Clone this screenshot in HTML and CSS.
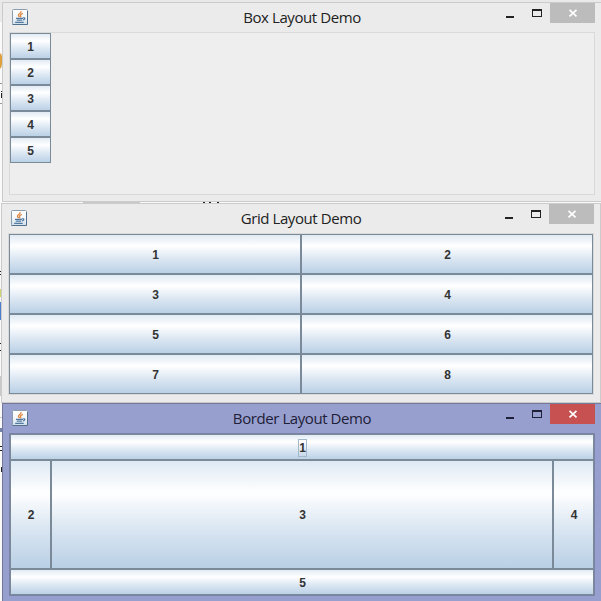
FILE: index.html
```html
<!DOCTYPE html>
<html lang="en">
<head>
<meta charset="utf-8">
<title>Layout Demos</title>
<link rel="stylesheet" href="styles.css">
</head>
<body>
<svg width="0" height="0" class="defs" aria-hidden="true">
  <defs>
    <linearGradient id="tile" x1="0" y1="0" x2="0" y2="1"><stop offset="0" stop-color="#fff"/><stop offset=".5" stop-color="#f4f7fa"/><stop offset="1" stop-color="#cfdfea"/></linearGradient>
    <symbol id="java" viewBox="0 0 16 16">
      <rect x=".5" y=".5" width="15" height="15" rx="1" fill="url(#tile)" stroke="#8a9dae"/>
      <path d="M.5 15.5h15V2" fill="none" stroke="#52718d"/>
      <path d="M9 2C10 4 6.2 4.6 6.4 6.2c.1.8.8 1.2 1.2 1.8M10.8 4.3C9.2 5 8 5.8 8.6 6.8c.4.7.3 1.1-.1 1.6" fill="none" stroke="#df8740" stroke-width="1.3"/>
      <path d="M4 9.4h7M4.8 11.2h5.4M3.2 13.4h8.5M11 8.9c2.5-.7 2.5 1.6 0 2" fill="none" stroke="#52799f" stroke-width="1.2"/>
    </symbol>
    <symbol id="min" viewBox="0 0 10 10"><path d="M1 8h8v2H1z" fill="currentColor"/></symbol>
    <symbol id="max" viewBox="0 0 10 10"><path fill-rule="evenodd" d="M0 1h10v8H0zM1 3v5h8V3z" fill="currentColor"/></symbol>
    <symbol id="close" viewBox="0 0 10 10"><path d="M1.5 1.8l7 6.6M8.5 1.8l-7 6.6" stroke="#fff" stroke-width="1.7" fill="none"/></symbol>
  </defs>
</svg>
<main class="desktop">
  <svg class="backdrop" width="601" height="601" viewBox="0 0 601 601" aria-hidden="true">
    <path fill="#e9e9e9" d="M0 0h601v2H0zM0 0h2v22H0z"/>
    <path fill="#dda03d" d="M0 53q2 1 2 4v7q0 3-2 5z"/>
    <path fill="#999" d="M0 83h2v1H0zM0 103h2v1H0z"/>
    <path fill="#222" d="M1 91h1v1H1zM1 93h1v5H1zM0 271h1v1H0zM0 274h1v1H0zM0 343h1v1H0zM0 350h1v1H0zM0 446h2v1H0zM0 450h2v1H0zM1 467h1v5H1zM203 202h2v1h-2zM209 202h2v1h-2zM217 202h2v1h-2z"/>
    <path fill="#cfd66d" d="M0 289h1v8H0z"/>
    <path fill="#4c7dcf" d="M0 302h1v18H0z"/>
    <path fill="#c9c9c9" d="M0 376h2v20H0zM83 202h57v1H83zM0 417h2v1H0z"/>
    <path fill="#7183aa" d="M0 428h2v4H0z"/>
  </svg>

  <section class="window box-window">
    <header class="titlebar">
      <svg class="app-icon"><use href="#java"/></svg>
      <h1 class="title"><span>Box Layout Demo</span></h1>
      <div class="controls">
        <svg class="glyph"><use href="#min"/></svg>
        <svg class="glyph"><use href="#max"/></svg>
        <span class="close"><svg class="glyph"><use href="#close"/></svg></span>
      </div>
    </header>
    <div class="client box-layout">
      <div class="button">1</div><div class="button">2</div><div class="button">3</div><div class="button">4</div><div class="button">5</div>
    </div>
  </section>

  <section class="window grid-window">
    <header class="titlebar">
      <svg class="app-icon"><use href="#java"/></svg>
      <h1 class="title"><span>Grid Layout Demo</span></h1>
      <div class="controls">
        <svg class="glyph"><use href="#min"/></svg>
        <svg class="glyph"><use href="#max"/></svg>
        <span class="close"><svg class="glyph"><use href="#close"/></svg></span>
      </div>
    </header>
    <div class="client grid-layout">
      <div class="button">1</div><div class="button">2</div><div class="button">3</div><div class="button">4</div>
      <div class="button">5</div><div class="button">6</div><div class="button">7</div><div class="button">8</div>
    </div>
  </section>

  <section class="window border-window">
    <header class="titlebar">
      <svg class="app-icon"><use href="#java"/></svg>
      <h1 class="title"><span>Border Layout Demo</span></h1>
      <div class="controls">
        <svg class="glyph"><use href="#min"/></svg>
        <svg class="glyph"><use href="#max"/></svg>
        <span class="close"><svg class="glyph"><use href="#close"/></svg></span>
      </div>
    </header>
    <div class="client border-layout">
      <div class="button north"><span class="focused">1</span></div>
      <div class="button">2</div><div class="button">3</div><div class="button">4</div>
      <div class="button south">5</div>
    </div>
  </section>
</main>
</body>
</html>
```
FILE: styles.css
```css
* { box-sizing: border-box; }

body { margin: 0; overflow: hidden; }

.defs { position: absolute; }

.desktop {
  position: relative;
  width: 601px;
  height: 601px;
  overflow: hidden;
  background: #fafafa;
}

.backdrop { position: absolute; left: 0; top: 0; }

/* Windows on the desktop */
.window {
  position: absolute;
  display: flex;
  flex-direction: column;
  border: 1px solid #cbcbcb;
  background: #ebebeb;
  color: #222;
}

.box-window { left: 2px; top: 2px; width: 601px; height: 200px; padding: 0 7px 6px 6px; }
.grid-window { left: 1px; top: 203px; width: 600px; height: 200px; padding: 0 6px 7px 6px; }
.border-window {
  left: 2px;
  top: 403px;
  width: 601px;
  height: 205px;
  padding: 0 7px 11px 6px;
  border-color: #777899;
  background: #979fce;
  color: #1e2038;
}

.titlebar {
  display: flex;
  flex: 0 0 29px;
  align-items: flex-start;
  padding-left: 3px;
}

.app-icon { width: 16px; height: 16px; margin-top: 6px; flex: none; }

.title {
  flex: 1;
  margin: 0;
  padding-left: 71px;
  font: 400 15px/29px "Open Sans", "Noto Sans", sans-serif;
  text-align: center;
  white-space: nowrap;
}
.title span { display: inline-block; letter-spacing: -0.42px; }

.controls { display: flex; flex: none; }
.controls > .glyph { margin: 5px 17px 0 0; }
.glyph { display: block; width: 10px; height: 10px; }

.close {
  display: flex;
  justify-content: center;
  width: 45px;
  height: 20px;
  margin-left: -9px;
  padding-top: 5px;
  background: #bcbcbc;
}
.border-window .close { background: #c75050; }

.client { flex: 1; min-height: 0; border: 1px solid #d9d9d9; }

.button {
  display: flex;
  align-items: center;
  justify-content: center;
  padding: 2px 0 0 1px;
  border: 1px solid #7a8a99;
  background: linear-gradient(#dde8f3, #fff 30%, #dde8f3 60%, #b8cfe5) border-box;
  color: #333;
  font: bold 12px/14px "Liberation Sans", Arial, sans-serif;
}

.box-layout { display: flex; flex-direction: column; background: #eee; }
.box-layout .button { width: 41px; height: 26px; padding-left: 0; }

.grid-layout {
  display: grid;
  grid-template: repeat(4, 40px) / repeat(2, 292px);
}

.border-layout {
  display: grid;
  grid-template: 26px 109px 26px / 41px 502px 41px;
  border-color: #7a83a5;
}
.border-layout .button:not(.north, .south) { padding-top: 1px; }
.north, .south { grid-column: 1 / -1; }

.focused {
  padding: 1px 0;
  outline: 1px solid #a3b8cc;
}
```
